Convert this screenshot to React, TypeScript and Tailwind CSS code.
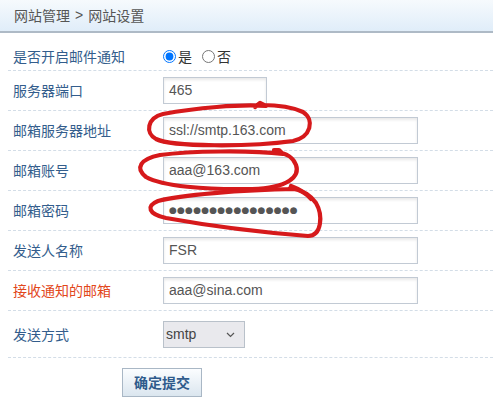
import React from "react";

const cjk = { fontFamily: '"Noto Sans CJK SC", "Microsoft YaHei", sans-serif' };
const latin = { fontFamily: '"Liberation Sans", Arial, "Noto Sans CJK SC", sans-serif' };

function Row({ label, red, children, h = "h-[40px]" }: { label: string; red?: boolean; children: React.ReactNode; h?: string }) {
  return (
    <div className={`flex items-center ${h} ml-[8px] pl-[5px] border-b border-dashed border-[#d3dde7]`}>
      <div className={`w-[150px] text-[14px] ${red ? "text-[#e2471b]" : "text-[#335d8c]"}`} style={cjk}>
        {label}
      </div>
      {children}
    </div>
  );
}

function TextBox({ value, w = "w-[255px]", dots }: { value: string; w?: string; dots?: boolean }) {
  return (
    <div
      className={`${w} h-[27px] flex items-center pl-[5px] bg-white border border-[#c2cad4] shadow-[inset_0_2px_3px_rgba(0,0,0,0.09)] text-[14px] text-[#555]`}
      style={latin}
    >
      {dots ? (
        <span className="text-[#555] text-[9px] tracking-[0.2px]" style={{ fontFamily: '"DejaVu Sans", sans-serif' }}>
          {"●●●●●●●●●●●●●●●●"}
        </span>
      ) : (
        value
      )}
    </div>
  );
}

export default function App() {
  return (
    <div className="relative w-[493px] h-[416px] bg-white overflow-hidden">
      <div
        className="h-[33px] flex items-center pl-[14px] border-b-2 border-[#aebac6] bg-gradient-to-b from-[#f6fafd] to-[#e0edf9] text-[14px] text-[#555]"
        style={cjk}
      >
        <span>网站管理</span>
        <span className="mx-[5px]" style={latin}>&gt;</span>
        <span>网站设置</span>
      </div>
      <div className="pt-[10px]">
        <Row label="是否开启邮件通知" h="h-[28px]">
          <div className="flex items-center text-[14px] text-[#333]" style={cjk}>
            <input type="radio" name="n" defaultChecked className="w-[13px] h-[13px] m-0" />
            <span className="ml-[2px]">是</span>
            <input type="radio" name="n" className="w-[13px] h-[13px] m-0 ml-[10px]" />
            <span className="ml-[2px]">否</span>
          </div>
        </Row>
        <Row label="服务器端口">
          <TextBox value="465" w="w-[104px]" />
        </Row>
        <Row label="邮箱服务器地址">
          <TextBox value="ssl://smtp.163.com" />
        </Row>
        <Row label="邮箱账号">
          <TextBox value="aaa@163.com" />
        </Row>
        <Row label="邮箱密码">
          <TextBox value="" dots />
        </Row>
        <Row label="发送人名称">
          <TextBox value="FSR" />
        </Row>
        <Row label="接收通知的邮箱" red>
          <TextBox value="aaa@sina.com" />
        </Row>
        <Row label="发送方式" h="h-[47px]">
          <div className="relative w-[82px] h-[27px]">
            <select
              className="appearance-none w-full h-full pl-[2px] bg-[#e9e9ed] border border-[#b9c1ca] text-[14px] text-[#444] outline-none"
              style={latin}
              defaultValue="smtp"
            >
              <option value="smtp">smtp</option>
            </select>
            <svg className="absolute right-[10px] top-[11px] pointer-events-none" width="9" height="6" viewBox="0 0 9 6">
              <path d="M1 1 L4.5 4.5 L8 1" fill="none" stroke="#555" strokeWidth="1.2" />
            </svg>
          </div>
        </Row>
        <div className="pl-[122px] pt-[10px]">
          <button
            className="w-[80px] h-[29px] border border-[#a9b7c5] bg-gradient-to-b from-[#fbfdff] to-[#dbe6ef] text-[14px] font-bold text-[#2f5b8c]"
            style={cjk}
          >
            确定提交
          </button>
        </div>
      </div>
      <svg className="absolute inset-0 pointer-events-none" width="493" height="416" viewBox="0 0 493 416">
        <g fill="none" stroke="#d6191b" strokeWidth="4.2" strokeLinecap="round" strokeLinejoin="round">
          <path d="M255 107 L260 103 L266 106 C 240 104, 195 108, 163 114 C 147 118, 145 133, 156 139 C 172 147, 250 147, 293 141 C 311 137, 315 120, 303 112 C 290 106, 275 105, 262 105" />
          <path d="M274 150 L279 150 L283 154 C 250 150, 190 151, 160 155 C 140 159, 135 168, 146 177 C 162 186, 205 190, 252 189 C 289 188, 300 176, 296 165 C 293 157, 286 153, 276 152" />
          <path d="M291 186 C 299 189, 306 193, 311 199" />
          <path d="M296 189 C 240 190, 180 195, 158 201 C 146 206, 148 214, 166 218 C 210 226, 270 233, 308 236 C 322 236, 323 215, 316 203 C 310 194, 302 190, 290 188" />
        </g>
      </svg>
    </div>
  );
}
